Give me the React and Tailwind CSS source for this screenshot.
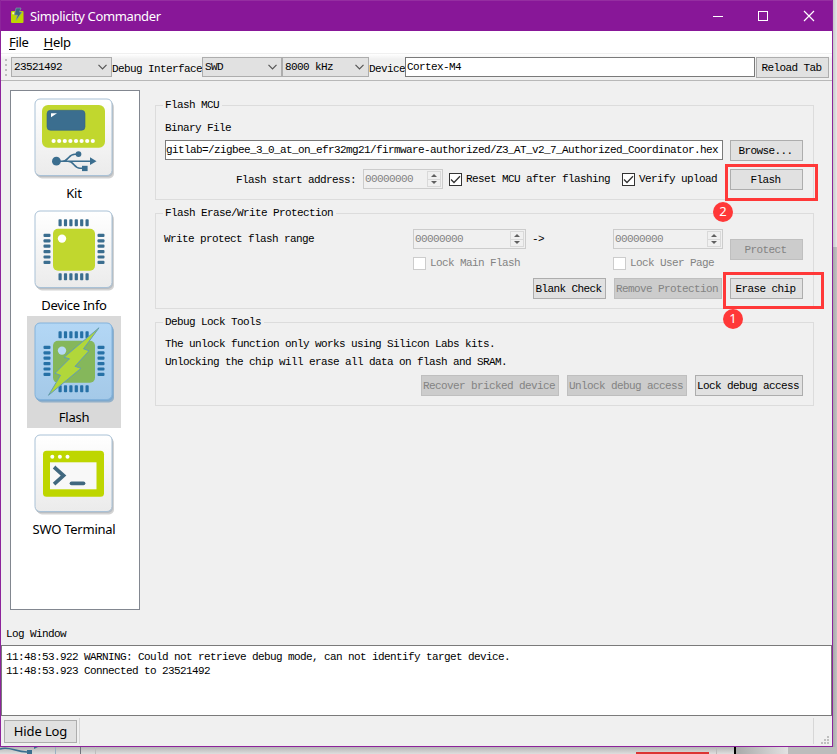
import React from "react";

const MONO = "font-['Liberation_Mono',monospace] text-[11px] tracking-[-0.6px] leading-[14px] whitespace-pre";
const SANS = "font-['Noto_Sans','Noto_Sans_CJK_SC',sans-serif]";

function Button({ children, className = "", disabled = false }) {
  const tone = disabled
    ? "border-[#bfbfbf] bg-[#cccccc] text-[#838383]"
    : "border-[#adadad] bg-[#e1e1e1] text-black";
  return (
    <button className={`${MONO} flex h-[21px] shrink-0 items-center justify-center border pt-px pr-[2px] ${tone} ${className}`}>
      {children}
    </button>
  );
}

function Combo({ value, className }) {
  return (
    <div className={`${MONO} flex h-5 shrink-0 items-center justify-between border border-[#adadad] bg-[#e1e1e1] pr-[4px] pl-[2px] ${className}`}>
      <span>{value}</span>
      <svg width="9" height="6" viewBox="0 0 9 6" fill="none" stroke="#555" strokeWidth="1.2">
        <path d="M.5 .8 4.5 4.8 8.5 .8" />
      </svg>
    </div>
  );
}

function Spin({ className }) {
  return (
    <div className={`${MONO} flex h-5 shrink-0 items-center justify-between border border-[#cccccc] bg-[#f0f0f0] pr-px pl-px text-[#838383] ${className}`}>
      <span>00000000</span>
      <div className="flex h-4 w-[14px] flex-col border border-[#d9d9d9]">
        <div className="flex flex-1 items-center justify-center border-b border-[#d9d9d9]">
          <svg width="6" height="3" viewBox="0 0 6 3" fill="#606060"><path d="M0 3 3 0 6 3z" /></svg>
        </div>
        <div className="flex flex-1 items-center justify-center">
          <svg width="6" height="3" viewBox="0 0 6 3" fill="#606060"><path d="M0 0 3 3 6 0z" /></svg>
        </div>
      </div>
    </div>
  );
}

function Check({ label, checked = false, className = "" }) {
  return (
    <div className={`${MONO} flex shrink-0 items-center gap-[4px] ${checked ? "text-black" : "text-[#838383]"} ${className}`}>
      <span className={`flex h-[13px] w-[13px] items-center justify-center border bg-white ${checked ? "border-[#333]" : "border-[#cccccc]"}`}>
        {checked && (
          <svg width="11" height="11" viewBox="0 0 11 11" fill="none" stroke="#333" strokeWidth="1.3">
            <path d="M1 5.5 4 8.5 10 2.3" />
          </svg>
        )}
      </span>
      <span>{label}</span>
    </div>
  );
}

function Group({ title, className, children }) {
  return (
    <fieldset className={`w-[659px] border border-[#dcdcdc] pr-[10px] pl-[7px] ${className}`}>
      <legend className={`${MONO} h-[14px] pr-[3px] pl-[2px]`}>{title}</legend>
      <div className="pl-[2px]">{children}</div>
    </fieldset>
  );
}

function Usb() {
  return (
    <g fill="none" stroke="#3b6e8f" strokeWidth="1.6">
      <path d="M22 63.400H56M28 63.400c7 0 6-7 13-7h3M34 63.400c6 0 6 7 12 7h3" />
      <circle cx="22.400" cy="63.400" r="4.400" fill="#3b6e8f" stroke="none" />
      <circle cx="44.500" cy="56.300" r="2.900" fill="#3b6e8f" stroke="none" />
      <path d="M56 59.500 62.500 63.400 56 67.200z" fill="#3b6e8f" stroke="none" />
      <path d="M48 68h5.600v5.300H48z" fill="#3b6e8f" stroke="none" />
    </g>
  );
}

function Chip({ selected = false }) {
  const pin = selected ? "#2671a6" : "#3b6e8f";
  return (
    <g>
      {[0, 1, 2, 3, 4, 5].map((i) => (
        <g key={i} fill={pin}>
          <rect x={24.500 + i * 5.4} y="9.500" width="3.200" height="7" rx="0.8" />
          <rect x={24.500 + i * 5.4} y="63.500" width="3.200" height="7" rx="0.8" />
          <rect x="9.500" y={24 + i * 5.4} width="7" height="3.200" rx="1" />
          <rect x="63.500" y={24 + i * 5.4} width="7" height="3.200" rx="1" />
        </g>
      ))}
      <rect x="19" y="19" width="42" height="42" rx="5" fill={selected ? "#85b75b" : "#c1d72e"} />
      <circle cx="28" cy="28.800" r="4.200" fill={selected ? "#b7d9f4" : "#fff"} />
    </g>
  );
}

function Tile({ kind }) {
  const selected = kind === "flash";
  return (
    <svg width="82" height="82" viewBox="0 0 82 82">
      <defs>
        <linearGradient id={`face-${kind}`} x1="0" y1="0" x2="0" y2="1">
          <stop offset="0" stopColor={selected ? "#b3d7f5" : "#ffffff"} />
          <stop offset="1" stopColor={selected ? "#a4c9e8" : "#ebebeb"} />
        </linearGradient>
      </defs>
      <rect x="4" y="5" width="77" height="76.500" rx="5" fill={selected ? "#91b0ca" : "#d3d3d3"} />
      <rect x="2.500" y="3.500" width="77.500" height="76.500" rx="5" fill={selected ? "#7da9cf" : "#b9bec3"} />
      <rect x="2" y="2" width="77" height="76.500" rx="5" fill={`url(#face-${kind})`} stroke={selected ? "#83b3dc" : "#a9c1d6"} />
      <g transform="translate(1 .8)">
        {kind === "kit" && (
          <g>
            <rect x="8" y="7.200" width="63" height="42.800" rx="6" fill="#c1d72e" />
            <rect x="13" y="12.500" width="38" height="20" rx="3.500" fill="#3b6e8f" stroke="#326283" strokeWidth=".6" />
            <path d="M17 15.500h6l-6 4z" fill="#fff" />
            {[0, 1, 2, 3, 4, 5, 6, 7].map((i) => (
              <circle key={i} cx={19.600 + i * 5.6} cy="43.200" r="2.100" fill="#fff" />
            ))}
            <Usb />
          </g>
        )}
        {(kind === "device" || selected) && <Chip selected={selected} />}
        {selected && (
          <path d="M65 6 30 35.500 35.500 37 21 51.500 26.500 53.500 14.500 73.500 47 46.500 41 44.500 55 29 49.500 27z" fill="#b1d73a" stroke="#659eb0" strokeWidth="1" strokeLinejoin="round" />
        )}
        {kind === "swo" && (
          <g>
            <rect x="9" y="17" width="61" height="46" rx="3.500" fill="#bed600" />
            <rect x="16" y="28.500" width="46.500" height="27" fill="#f8f8f8" />
            {[18.300, 25.900, 33.500].map((x) => <circle key={x} cx={x} cy="23" r="2" fill="#fff" />)}
            <path d="M21.500 34.500 29.500 41.800 21.500 49" fill="none" stroke="#41687f" strokeWidth="3.800" strokeLinecap="square" />
            <path d="M37.500 49.500H49.500" stroke="#41687f" strokeWidth="3.700" strokeLinecap="round" />
          </g>
        )}
      </g>
    </svg>
  );
}

function SideItem({ kind, label, selected = false }) {
  return (
    <div className={`flex h-28 w-[94px] flex-col items-center pt-[5px] ${selected ? "bg-[#d9d9d9]" : ""}`}>
      <Tile kind={kind} />
      <span className={`${SANS} mt-[5px] text-[13px] leading-[18px] tracking-[-0.25px] whitespace-nowrap`}>{label}</span>
    </div>
  );
}

function TitleBar() {
  return (
    <div className="flex h-[31px] shrink-0 items-center border-t border-[#952ea1] bg-[#881798] pl-[10px] text-white">
      <svg className="mb-[2px]" width="13" height="17" viewBox="0 0 13 17">
        <rect y="4" width="12.500" height="12" rx="1" fill="#bed600" />
        <rect x="1.300" y="5.300" width="2" height="2" fill="#fff5c0" />
        <path d="M5 1h5L8.500 5H11L5 13.500 6.500 8H3.500z" fill="#41687f" stroke="#899db0" strokeWidth=".6" />
      </svg>
      <span className={`${SANS} mb-px ml-[6px] grow text-[13px] leading-[18px] tracking-[-0.37px]`}>Simplicity Commander</span>
      <svg width="120" height="14" viewBox="0 0 120 14" fill="none" stroke="#fff" strokeWidth="1">
        <path d="M1 7.500H11" />
        <rect x="46.500" y="2.500" width="9" height="9" />
        <path d="M92 2 102 12M102 2 92 12" strokeWidth="1.200" />
      </svg>
    </div>
  );
}

export default function App() {
  return (
    <div className="relative h-[754px] w-[837px] overflow-hidden bg-[#d4d4d4] text-black">
      <div className="flex h-[747px]">
        <div className="flex w-[833px] flex-col border-x border-b border-[#8d249b] bg-[#f0f0f0]">
          <TitleBar />
          <div className={`${SANS} flex h-[22px] shrink-0 items-center gap-[15px] bg-white pt-[2px] pl-[8px] text-[13px] tracking-[-0.3px]`}>
            <span><span className="underline underline-offset-2">F</span>ile</span>
            <span><span className="underline underline-offset-2">H</span>elp</span>
          </div>
          <div className="flex h-[28px] shrink-0 items-start border-t border-b border-t-[#f0f0f0] border-b-[#b8b8b8] bg-linear-to-b from-white to-[#f0f0f0] to-20% pt-[3px]">
            <div className="mt-[2px] ml-[4px] flex w-[6px] flex-col gap-[3px]">
              {[0, 1, 2, 3].map((i) => <i key={i} className="h-[2px] w-[2px] bg-[#bcbcbc]" />)}
            </div>
            <Combo value="23521492" className="w-[101px]" />
            <span className={`${MONO} mt-[5px] w-[90px]`}>Debug Interface</span>
            <Combo value="SWD" className="w-[80px]" />
            <Combo value="8000 kHz" className="w-[87px]" />
            <span className={`${MONO} mt-[5px] w-[36px]`}>Device</span>
            <div className={`${MONO} flex h-5 w-[350px] items-center border border-[#7a7a7a] bg-white pl-px`}>Cortex-M4</div>
            <Button className="ml-px w-[73px]">Reload Tab</Button>
          </div>

          <div className="flex h-[529px] shrink-0 pt-[9px] pl-[9px]">
            <nav className="flex h-[520px] w-[130px] flex-col items-center border border-[#828790] bg-white pt-px pr-[2px]">
              <SideItem kind="kit" label="Kit" />
              <SideItem kind="device" label="Device Info" />
              <SideItem kind="flash" label="Flash" selected />
              <SideItem kind="swo" label="SWO Terminal" />
            </nav>

            <main className="ml-[15px] pt-[8px]">
              <Group title="Flash MCU" className="h-[102px]">
                <div className={`${MONO} mt-[9px] h-[19px]`}>Binary File</div>
                <div className="flex">
                  <div className={`${MONO} flex h-5 w-[558px] items-center justify-end overflow-hidden border border-[#7a7a7a] bg-white pr-[4px]`}>
                    gitlab=/zigbee_3_0_at_on_efr32mg21/firmware-authorized/Z3_AT_v2_7_Authorized_Coordinator.hex
                  </div>
                  <Button className="ml-[7px] w-[73px]">Browse...</Button>
                </div>
                <div className="mt-[8px] flex items-start">
                  <span className={`${MONO} mt-[4px] ml-[71px] w-[127px]`}>Flash start address:</span>
                  <Spin className="w-[80px]" />
                  <Check label="Reset MCU after flashing" checked className="mt-[3px] ml-[6px] w-[173px]" />
                  <Check label="Verify upload" checked className="mt-[3px] w-[101px]" />
                  <Button className="ml-[7px] w-[73px]">Flash</Button>
                </div>
              </Group>

              <Group title="Flash Erase/Write Protection" className="mt-[6px] h-[103px]">
                <div className="mt-[9px] flex">
                  <div className="w-[565px]">
                    <div className="flex items-center">
                      <span className={`${MONO} -ml-px w-[249px]`}>Write protect flash range</span>
                      <Spin className="w-[113px]" />
                      <span className={`${MONO} ml-[6px] w-[81px]`}>-&gt;</span>
                      <Spin className="w-[110px]" />
                    </div>
                    <div className="mt-[7px] flex pl-[248px]">
                      <Check label="Lock Main Flash" className="w-[200px]" />
                      <Check label="Lock User Page" />
                    </div>
                  </div>
                  <Button disabled className="mt-[10px] w-[73px]">Protect</Button>
                </div>
                <div className="mt-[8px] flex justify-end gap-[8px]">
                  <Button className="w-[73px]">Blank Check</Button>
                  <Button disabled className="w-[108px]">Remove Protection</Button>
                  <Button className="w-[73px]">Erase chip</Button>
                </div>
              </Group>

              <Group title="Debug Lock Tools" className="mt-[6px] h-[91px]">
                <p className={`${MONO} mt-[6px] leading-[18px]!`}>The unlock function only works using Silicon Labs kits.</p>
                <p className={`${MONO} leading-[18px]!`}>Unlocking the chip will erase all data on flash and SRAM.</p>
                <div className="mt-[4px] flex justify-end gap-[8px]">
                  <Button disabled className="w-[138px]">Recover bricked device</Button>
                  <Button disabled className="w-[120px]">Unlock debug access</Button>
                  <Button className="w-[108px]">Lock debug access</Button>
                </div>
              </Group>
            </main>
          </div>

          <div className={`${MONO} flex h-[35px] shrink-0 items-end pb-[4px] pl-[5px]`}>Log Window</div>
          <div className={`${MONO} h-[71px] shrink-0 border border-[#7a7a7a] bg-white pt-[4px] pl-[4px]`}>
            <div>11:48:53.922 WARNING: Could not retrieve debug mode, can not identify target device.</div>
            <div>11:48:53.923 Connected to 23521492</div>
          </div>
          <footer className="flex grow items-center pl-[3px]">
            <button className={`${SANS} flex h-[23px] w-[73px] items-center justify-center border border-[#adadad] bg-[#e1e1e1] pt-px text-[13px] tracking-[-0.1px]`}>Hide Log</button>
            <div className="ml-[2px] h-[26px] w-px bg-[#d7d7d7]" />
            <div className="ml-auto h-[26px] w-px bg-[#d7d7d7]" />
            <svg className="mr-[3px] mb-[2px] ml-[7px] self-end" width="8" height="8" viewBox="0 0 8 8" fill="#bfbfbf">
              <path d="M6 0h2v2H6zM3 3h2v2H3zM6 3h2v2H6zM0 6h2v2H0zM3 6h2v2H3zM6 6h2v2H6z" />
            </svg>
          </footer>
        </div>
        <div className="flex w-[4px] flex-col">
          <div className="h-[247px] bg-linear-to-r from-[#c8c8c8] to-[#e8e8e8]" />
          <div className="grow bg-linear-to-r from-[#a9a9a9] to-[#c3c3c3]" />
        </div>
      </div>
      <div className="flex h-[7px] items-stretch bg-linear-to-b from-[#b5b5b5] to-[#dedede]">
        <svg width="55" height="7" viewBox="0 0 55 7" fill="none" stroke="#3b6e8f" strokeWidth="1.500">
          <path d="M0 2C10-1 15 5 27 5" />
          <path d="M27 3h5v4h-5zM34 0h4l-4 2z" fill="#3b6e8f" stroke="none" />
        </svg>
        <div className="w-px bg-[#9aafc0]" />
        <div className="ml-[24px] w-px bg-[#70737c]" />
        <div className="ml-[14px] w-px bg-[#bdbdbd]" />
        <div className="mt-[5px] ml-[540px] w-[73px] bg-[#dc3434]" />
        <div className="ml-[7px] w-px bg-[#bababa]" />
        <div className="ml-[17px] w-[2px] bg-black" />
        <div className="w-[52px] bg-linear-to-r from-[#a9a9a9] to-[#e2e2e2]" />
        <div className="grow bg-[#bcbcbc]" />
      </div>

      {/* Step markers laid over the window */}
      <div className="absolute top-[164px] left-[725px] h-[37px] w-[93px] border-[3px] border-[#ff3838]" />
      <div className="absolute top-[272px] left-[723px] h-[37px] w-[101px] border-[3px] border-[#ff3838]" />
      <div className={`${SANS} absolute top-[202px] left-[713px] flex h-5 w-5 items-center justify-center rounded-full bg-[#ff3838] text-[13px] text-white`}>2</div>
      <div className={`${SANS} absolute top-[309px] left-[723px] flex h-5 w-5 items-center justify-center rounded-full bg-[#ff3838] text-[13px] text-white`}>1</div>
    </div>
  );
}
